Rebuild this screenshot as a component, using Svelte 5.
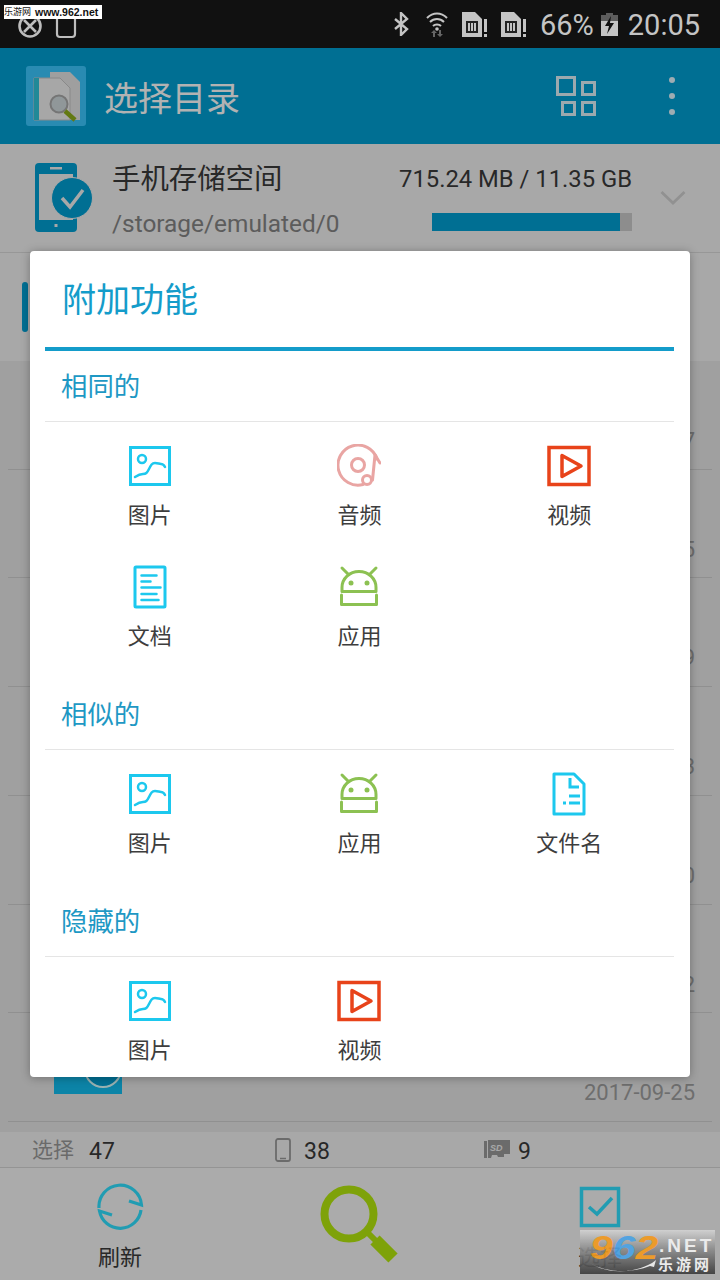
<script lang="ts">
const dates = ['2017-09-27', '2017-09-25', '2017-09-29', '2017-09-23', '2017-09-30', '2017-09-22', '2017-09-25'];

const sections = [
	{ title: '相同的', items: [['image', '图片'], ['audio', '音频'], ['video', '视频'], ['doc', '文档'], ['app', '应用']] },
	{ title: '相似的', items: [['image', '图片'], ['app', '应用'], ['file', '文件名']] },
	{ title: '隐藏的', items: [['image', '图片'], ['video', '视频']] }
];
</script>

{#snippet featureIcon(kind: string)}
	<svg class="feature-icon" viewBox="0 0 44 44" aria-hidden="true">
		{#if kind === 'image'}
			<g fill="none" stroke="#1cc8ee" stroke-width="3">
				<rect x="2.5" y="3.5" width="39" height="37" />
				<circle cx="14" cy="15" r="4" stroke-width="2.5" />
				<path d="M7 33c3-2 5-3 8-3s4-1 6-5 3-6 6-6 4 1 6 1 3 1 4 3" stroke-linecap="round" stroke-width="2.5" />
			</g>
		{:else if kind === 'audio'}
			<g fill="none" stroke="#e9a5a3" stroke-width="3">
				<path d="M26 40.5A20 20 0 1 1 40 15" stroke-linecap="round" />
				<circle cx="21" cy="21" r="6.5" />
				<circle cx="30" cy="36" r="4.5" />
				<path d="M35.500 36L38 11l5 8" stroke-linecap="round" stroke-linejoin="round" />
			</g>
		{:else if kind === 'video'}
			<g fill="none" stroke="#e8431a" stroke-width="3.5">
				<rect x="2" y="3.5" width="40" height="37" />
				<path d="M15 11.5v21L34 22z" stroke-linejoin="round" />
			</g>
		{:else if kind === 'doc'}
			<g fill="none" stroke="#1cc8ee">
				<rect x="7" y="2" width="30" height="40" rx="1" stroke-width="3" />
				<path d="M13.5 10.5h15M13.5 16.5h9M13.5 22.5h19M13.5 29h15M13.5 35h17" stroke-width="2.5" stroke-linecap="round" />
			</g>
		{:else if kind === 'app'}
			<g fill="none" stroke="#8cc152" stroke-width="3" stroke-linecap="round">
				<path d="M5 26.5v-4a17 16 0 0 1 34 0v4z" stroke-linejoin="round" />
				<path d="M5 3l6 6M39 3l-6 6" />
				<path d="M4.5 30v9.5h35V30" stroke-linejoin="round" />
				<circle cx="14" cy="18" r="2.5" fill="#8cc152" stroke="none" />
				<circle cx="30" cy="18" r="2.5" fill="#8cc152" stroke="none" />
			</g>
		{:else}
			<g fill="none" stroke="#1cc8ee" stroke-width="3">
				<path d="M7 2h20l10 10v30H7z" stroke-linejoin="round" />
				<path d="M23 6v9h9" />
				<path d="M22 24h11M22 31h11M16 31h3" />
			</g>
		{/if}
	</svg>
{/snippet}

<div class="screen">
	<div class="status-bar">
		<div class="status-left">
			<svg width="24" height="24" viewBox="0 0 24 24" aria-hidden="true">
				<g fill="none" stroke="#bdbdbd" stroke-width="2.6">
					<circle cx="12" cy="12" r="10.5" />
					<path d="M6 6l12 12M18 6L6 18" />
				</g>
			</svg>
			<svg width="22" height="26" viewBox="0 0 22 26" aria-hidden="true">
				<path d="M2 3v18a3 3 0 0 0 3 3h12a3 3 0 0 0 3-3V3M8 1v5M14 1v5" fill="none" stroke="#bdbdbd" stroke-width="2.2" />
			</svg>
		</div>
		<div class="status-right">
			<svg class="bt" width="17" height="24" viewBox="0 0 17 24" aria-hidden="true">
				<path d="M2 7l12 10-6 6V1l6 6L2 17" fill="none" stroke="#c4c4c4" stroke-width="2.4" />
			</svg>
			<svg class="wifi" width="22" height="25" viewBox="0 0 22 25" aria-hidden="true">
				<g fill="none" stroke="#c4c4c4" stroke-width="2">
					<path d="M1 6c6-6 14-6 20 0M4 10c4-4 10-4 14 0M7 14c2-2 6-2 8 0" />
				</g>
				<circle cx="11" cy="17" r="1.8" fill="#c4c4c4" />
				<path d="M7 25v-4H5l3-3 3 3H9v4zM15 18v4h2l-3 3-3-3h2v-4z" fill="#666" />
			</svg>
			<svg class="sim" width="26" height="25" viewBox="0 0 26 25" aria-hidden="true">
				<path d="M0 0h13l7 7v18H0z" fill="#c4c4c4" />
				<path d="M4 9h12v12H4z" fill="#222" />
				<path d="M6 11h2v8H6zM9 11h2v8H9zM12 11h2v8h-2z" fill="#c4c4c4" />
				<path d="M22 7h3v13h-3zM22 22h3v3h-3z" fill="#c4c4c4" />
			</svg>
			<svg class="sim second" width="26" height="25" viewBox="0 0 26 25" aria-hidden="true">
				<path d="M0 0h13l7 7v18H0z" fill="#c4c4c4" />
				<path d="M4 9h12v12H4z" fill="#222" />
				<path d="M6 11h2v8H6zM9 11h2v8H9zM12 11h2v8h-2z" fill="#c4c4c4" />
				<path d="M22 7h3v13h-3zM22 22h3v3h-3z" fill="#c4c4c4" />
			</svg>
			<span class="pct">66%</span>
			<svg class="battery" width="17" height="23" viewBox="0 0 17 23" aria-hidden="true">
				<path d="M5 0h7v2h5v8H0V2h5z" fill="#5c5c5c" />
				<path d="M0 8h17v15H0z" fill="#c4c4c4" />
				<path d="M10 3L4 13h4l-2 8 7-11H9z" fill="#111" />
			</svg>
			<span class="time">20:05</span>
		</div>
	</div>

	<header class="app-bar">
		<div class="app-icon">
			<svg width="60" height="60" viewBox="0 0 60 60" aria-hidden="true">
				<path d="M24 6h20l10 10v38H24z" fill="#e4e4e4" />
				<path d="M8 12h26l10 10v32H8z" fill="#efefef" stroke="#c4c4c4" stroke-width="1" />
				<rect x="8" y="12" width="5" height="42" fill="#30c4d8" />
				<circle cx="33" cy="38" r="8.5" fill="#cfd8dc" stroke="#a8a8a8" stroke-width="2" />
				<path d="M39 45l10 9" stroke="#8fae1b" stroke-width="4.5" />
			</svg>
		</div>
		<span class="app-title">选择目录</span>
		<svg class="grid-btn" width="40" height="40" viewBox="0 0 40 40" aria-hidden="true">
			<g fill="none" stroke="#fff" stroke-opacity=".88" stroke-width="3">
				<rect x="1.5" y="1.5" width="17" height="17" />
				<rect x="26.5" y="6.5" width="12" height="12" />
				<rect x="6.5" y="26.5" width="12" height="12" />
				<rect x="26.5" y="26.5" width="12" height="12" />
			</g>
		</svg>
		<div class="more-btn" aria-hidden="true"><i></i><i></i><i></i></div>
	</header>

	<section class="storage">
		<svg class="phone" width="60" height="72" viewBox="0 0 60 72" aria-hidden="true">
			<rect x="2" y="3" width="42" height="69" rx="4" fill="#009fd3" />
			<rect x="6" y="14" width="34" height="46" fill="#f1f1f1" />
			<rect x="17" y="7" width="12" height="2.5" fill="#f1f1f1" />
			<rect x="21.5" y="64" width="3" height="3" fill="#f1f1f1" />
			<circle cx="39" cy="38" r="20.5" fill="#009fd3" stroke="#f1f1f1" stroke-width="1" />
			<path d="M29 38l8 9 13-17" fill="none" stroke="#f1f1f1" stroke-width="3.5" />
		</svg>
		<div class="storage-text">
			<div class="storage-name">手机存储空间</div>
			<div class="storage-path">/storage/emulated/0</div>
		</div>
		<div class="storage-usage">
			<div class="usage-text">715.24 MB / 11.35 GB</div>
			<div class="usage-track"><div class="usage-fill" style="width: 94%"></div></div>
		</div>
		<svg class="chevron" width="26" height="16" viewBox="0 0 26 16" aria-hidden="true">
			<path d="M1.5 2L13 13 24.5 2" fill="none" stroke="#d0d0d0" stroke-width="2.8" />
		</svg>
	</section>

	<div class="path-row"><span class="path-pill"></span></div>

	<ul class="files">
		{#each dates as date}
			<li class="file-row">
				<div class="thumb"><span class="thumb-badge"></span></div>
				<time class="file-date">{date}</time>
			</li>
		{/each}
	</ul>

	<div class="stats">
		<div class="stat">
			<span class="stat-label">选择</span>
			<span class="stat-num">47</span>
		</div>
		<div class="stat">
			<svg width="16" height="24" viewBox="0 0 16 24" aria-hidden="true">
				<rect x="1" y="1" width="14" height="22" rx="2" fill="none" stroke="#9a9a9a" stroke-width="1.8" />
				<path d="M5 20.5h6" stroke="#9a9a9a" stroke-width="1.5" />
			</svg>
			<span class="stat-num">38</span>
		</div>
		<div class="stat sd">
			<svg width="26" height="19" viewBox="0 0 26 19" aria-hidden="true">
				<path d="M0 1h3v17H0zM4 0h22v14h-6v3h-6l-1-2H8l-1 3H4z" fill="#9a9a9a" />
				<text x="6" y="11" class="sd-text">SD</text>
			</svg>
			<span class="stat-num">9</span>
		</div>
	</div>

	<nav class="toolbar">
		<div class="tool">
			<svg width="48" height="48" viewBox="0 0 48 48" aria-hidden="true">
				<g fill="none" stroke="#30e0ff" stroke-width="3.2">
					<path d="M3 25A21 21 0 0 1 45.5 22L33 18" />
					<path d="M45 27A21 21 0 0 1 3.5 28L16 32" />
				</g>
			</svg>
			<span class="tool-label">刷新</span>
		</div>
		<svg class="lens" width="80" height="80" viewBox="0 0 80 80" aria-hidden="true">
			<circle cx="29" cy="29" r="24.5" fill="none" stroke="#b5e90e" stroke-width="8" />
			<path d="M47 47l10 10" stroke="#b5e90e" stroke-width="6" />
			<path d="M55 55l18 18" stroke="#b5e90e" stroke-width="13" />
		</svg>
		<div class="tool">
			<svg width="48" height="48" viewBox="0 0 48 48" aria-hidden="true">
				<rect x="5.5" y="5.5" width="37" height="37" fill="none" stroke="#30e0ff" stroke-width="3.5" />
				<path d="M13 24l8 7 15-16" fill="none" stroke="#30e0ff" stroke-width="3.5" />
			</svg>
			<span class="tool-label">选择</span>
		</div>
	</nav>

	<div class="scrim"></div>

	<div class="dialog" role="dialog" aria-label="附加功能">
		<h2 class="dialog-title">附加功能</h2>
		{#each sections as section}
			<h3 class="section-title">{section.title}</h3>
			<div class="feature-grid">
				{#each section.items as [kind, label]}
					<div class="feature">
						{@render featureIcon(kind)}
						<span class="feature-label">{label}</span>
					</div>
				{/each}
			</div>
		{/each}
	</div>

	<div class="mark-top"><b>乐游网</b><span>www.962.net</span></div>
	<div class="mark-bottom">
		<svg class="mark-swoosh" width="135" height="45" viewBox="0 0 135 45" aria-hidden="true">
			<path d="M10 33c15 10 40 12 62 0l4-3-2 7-4-1C50 44 24 42 10 33z" fill="#eee" />
		</svg>
		<span class="mark-num"><em class="orange">9</em><em class="blue">6</em><em class="orange">2</em></span>
		<span class="mark-net">.NET</span>
		<span class="mark-cn">乐游网</span>
	</div>
</div>

<style>
	:global(body) {
		margin: 0;
	}

	.screen {
		position: relative;
		display: flex;
		flex-direction: column;
		width: 720px;
		height: 1280px;
		overflow: hidden;
		background: #e5e5e5;
		font-family: Roboto, "Noto Sans CJK SC", sans-serif;
	}

	.status-bar {
		position: relative;
		z-index: 2;
		display: flex;
		flex: none;
		align-items: center;
		justify-content: space-between;
		height: 48px;
		padding: 0 20px 0 18px;
		box-sizing: border-box;
		background: #111;
		color: #c4c4c4;
	}

	.status-left {
		display: flex;
		align-items: center;
		gap: 13px;
		padding-top: 4px;
	}

	.status-right {
		display: flex;
		align-items: center;
	}

	.wifi {
		margin-left: 16px;
	}

	.sim {
		margin-left: 14px;
	}

	.sim.second {
		margin-left: 13px;
	}

	.pct,
	.time {
		padding-top: 2px;
		font-size: 29px;
		line-height: 48px;
	}

	.pct {
		margin-left: 13px;
	}

	.battery {
		margin-left: 7px;
	}

	.time {
		margin-left: 10px;
	}

	.app-bar {
		display: flex;
		flex: none;
		align-items: center;
		height: 96px;
		padding-left: 26px;
		box-sizing: border-box;
		background: #009fd3;
	}

	.app-icon {
		display: flex;
		width: 60px;
		height: 60px;
		border-radius: 3px;
		background: #3cc8ff;
	}

	.app-title {
		margin-left: 18px;
		font-size: 34px;
		color: #fff;
	}

	.grid-btn {
		margin-left: auto;
	}

	.more-btn {
		display: flex;
		flex-direction: column;
		gap: 10px;
		margin: 0 45px 0 73px;
	}

	.more-btn i {
		width: 6px;
		height: 6px;
		border-radius: 50%;
		background: #e2f6ff;
	}

	.storage {
		position: relative;
		display: flex;
		flex: none;
		align-items: flex-start;
		height: 109px;
		box-sizing: border-box;
		padding: 0 34px 0 33px;
		border-bottom: 1px solid #d8d8d8;
		background: #f1f1f1;
	}

	.phone {
		margin-top: 16px;
		flex: none;
	}

	.storage-text {
		margin-left: 19px;
		padding-top: 15px;
	}

	.storage-name {
		font-size: 28.4px;
		line-height: 42px;
		color: #3a3a3a;
	}

	.storage-path {
		margin-top: 3px;
		font-size: 24.4px;
		line-height: 40px;
		color: #858585;
	}

	.storage-usage {
		display: flex;
		flex-direction: column;
		align-items: flex-end;
		margin-left: auto;
		margin-right: 54px;
		padding-top: 14px;
	}

	.usage-text {
		font-size: 23.8px;
		line-height: 42px;
		color: #3a3a3a;
	}

	.usage-track {
		width: 200px;
		height: 18px;
		margin-top: 13px;
		background: #cbcbcb;
	}

	.usage-fill {
		height: 100%;
		background: #009fd3;
	}

	.chevron {
		position: absolute;
		right: 34px;
		top: 46px;
	}

	.path-row {
		display: flex;
		flex: none;
		align-items: center;
		height: 108px;
		padding-left: 22px;
		box-sizing: border-box;
		background: #f1f1f1;
	}

	.path-pill {
		width: 6px;
		height: 50px;
		border-radius: 3px;
		background: #009fd3;
	}

	.files {
		display: grid;
		flex: none;
		grid-template-rows: repeat(7, 1fr);
		height: 761px;
		margin: 0;
		padding: 0;
		list-style: none;
	}

	.file-row {
		display: flex;
		align-items: flex-start;
		justify-content: space-between;
		box-sizing: border-box;
		margin: 0 8px;
		padding: 13px 17px 0 46px;
		border-bottom: 1px solid #cfcfcf;
	}

	.thumb {
		position: relative;
		width: 68px;
		height: 68px;
		background: #12bdef;
	}

	.thumb-badge {
		position: absolute;
		right: 0;
		top: 24px;
		width: 38px;
		height: 38px;
		box-sizing: border-box;
		border: 2px solid #dff;
		border-radius: 50%;
		background: #009fd3;
	}

	.file-date {
		margin-top: 52px;
		font-size: 22px;
		line-height: 30px;
		color: #9e9e9e;
	}

	.stats {
		display: grid;
		flex: none;
		grid-template-columns: 243px 209px 1fr;
		align-items: center;
		height: 36px;
		box-sizing: border-box;
		margin-top: 10px;
		padding-left: 32px;
		border-bottom: 1px solid #d4d4d4;
		background: #f1f1f1;
	}

	.stat {
		display: flex;
		align-items: center;
		gap: 13px;
	}

	.stat.sd {
		gap: 8px;
	}

	.stat-label {
		margin: 0 2px 3px 0;
		font-size: 21px;
		color: #999;
	}

	.stat-num {
		padding-top: 3px;
		font-size: 23px;
		color: #3a3a3a;
	}

	.sd-text {
		font: italic bold 9px "Liberation Sans", sans-serif;
		fill: #f1f1f1;
	}

	.toolbar {
		display: flex;
		flex: 1;
		justify-content: space-between;
		padding: 15px 96px 0;
		background: #f5f5f5;
	}

	.tool {
		display: flex;
		flex-direction: column;
		align-items: center;
	}

	.tool-label {
		margin-top: 11px;
		font-size: 22px;
		line-height: 32px;
		color: #3a3a3a;
	}

	.lens {
		margin-top: 2px;
	}

	.scrim {
		position: absolute;
		inset: 0;
		z-index: 1;
		background: rgba(0, 0, 0, 0.3);
	}

	.dialog {
		position: absolute;
		z-index: 1;
		left: 30px;
		top: 251px;
		width: 660px;
		height: 826px;
		box-sizing: border-box;
		padding: 0 16px 0 15px;
		border-radius: 4px;
		background: #fff;
		box-shadow: 0 1px 10px rgba(0, 0, 0, 0.3);
	}

	.dialog-title {
		height: 100px;
		box-sizing: border-box;
		margin: 0;
		padding: 0 0 0 17px;
		border-bottom: 4px solid #149cca;
		font-size: 34px;
		font-weight: 400;
		line-height: 98px;
		color: #149cca;
	}

	.section-title {
		height: 71px;
		box-sizing: border-box;
		margin: 0;
		padding: 0 0 0 16px;
		border-bottom: 1px solid #e5e5e5;
		font-size: 26.4px;
		font-weight: 400;
		line-height: 72px;
		color: #1e98c4;
	}

	.feature-grid {
		display: grid;
		grid-template-columns: repeat(3, 1fr);
		row-gap: 34px;
		padding: 22px 0 27px;
	}

	.feature {
		display: flex;
		flex-direction: column;
		align-items: center;
	}

	.feature-icon {
		display: block;
		width: 44px;
		height: 44px;
	}

	.feature-label {
		margin-top: 13px;
		font-size: 22px;
		line-height: 30px;
		color: #3d3d3d;
	}

	.mark-top {
		position: absolute;
		z-index: 3;
		display: flex;
		gap: 4px;
		left: 4px;
		top: 5px;
		width: 98px;
		height: 14px;
		background: #fff;
		color: #111;
		font: 700 10.5px/14px "Liberation Sans", "Noto Sans CJK SC", sans-serif;
		white-space: nowrap;
	}

	.mark-top b {
		font-size: 9px;
		font-weight: 400;
	}

	.mark-bottom {
		position: absolute;
		z-index: 3;
		left: 580px;
		top: 1230px;
		width: 135px;
		height: 44px;
		background: linear-gradient(#d4d4d4, #8a8a8a 45%, #3a3a3a);
		opacity: 0.9;
	}

	.mark-swoosh {
		position: absolute;
		left: 0;
		top: 0;
	}

	.mark-num {
		position: absolute;
		left: 10px;
		top: 0;
		font: italic 700 34px/34px "Liberation Sans", sans-serif;
		transform: scaleX(1.2);
		transform-origin: left top;
	}

	.mark-num em {
		font-style: inherit;
	}

	.orange {
		color: #f39a1e;
	}

	.blue {
		color: #4aa3e6;
	}

	.mark-net {
		position: absolute;
		left: 79px;
		top: 6px;
		font: 700 19px/20px "Liberation Sans", sans-serif;
		letter-spacing: 3px;
		color: #f2f2f2;
	}

	.mark-cn {
		position: absolute;
		left: 78px;
		top: 24px;
		font: 700 15px/20px "Noto Sans CJK SC", sans-serif;
		letter-spacing: 3px;
		color: #f2f2f2;
	}
</style>
